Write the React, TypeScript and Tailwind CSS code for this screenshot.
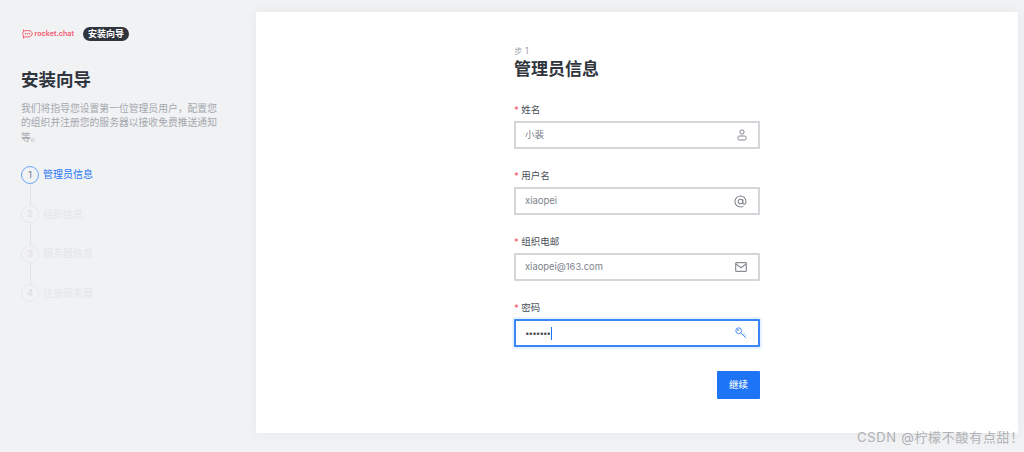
import type { ReactNode } from "react";

const font = "font-['Inter','Noto_Sans_CJK_SC',sans-serif]";

const steps = [
  { n: 1, label: "管理员信息", active: true },
  { n: 2, label: "组织信息", active: false },
  { n: 3, label: "服务器信息", active: false },
  { n: 4, label: "注册服务器", active: false },
];

const Logo = () => (
  <div className="flex w-[52px] items-center gap-[1.5px] pl-[1px]">
    <svg width="11" height="10" viewBox="0 0 12 11" fill="none" stroke="#f5596c" strokeWidth="1.1" className="shrink-0">
      <path d="M1.5 1 L3 2.2 C5 1.5 7.5 1.5 9 2.2 C10.5 3 11.2 4 11.2 5.2 C11.2 7.5 8.8 8.8 6 8.8 C5 8.8 4.2 8.7 3.5 8.4 L1.5 10 L1.7 7.3 C1 6.6 0.7 6 0.7 5.2 C0.7 4.4 1 3.8 1.7 3.2 Z" />
      <circle cx="3.8" cy="5.3" r="0.4" fill="#f5596c" />
      <circle cx="6" cy="5.3" r="0.4" fill="#f5596c" />
      <circle cx="8.2" cy="5.3" r="0.4" fill="#f5596c" />
    </svg>
    <span className="text-[7.2px] leading-none font-semibold whitespace-nowrap text-[#f5596c]">rocket.chat</span>
  </div>
);

const UserIcon = () => (
  <svg width="10" height="12" viewBox="0 0 10 12" fill="none" stroke="#7d828a" strokeWidth="1">
    <circle cx="5" cy="3" r="2.1" />
    <rect x="0.9" y="7" width="8.2" height="4" rx="1.6" />
  </svg>
);

const AtIcon = () => (
  <svg width="13" height="13" viewBox="0 0 14 14" fill="none" stroke="#7d828a" strokeWidth="1.1">
    <circle cx="7" cy="7" r="2.5" />
    <path d="M9.5 4.5 V8 C9.5 9.4 10.2 10 11 10 C12.2 10 12.9 8.8 12.9 7 C12.9 3.6 10.3 1 7 1 C3.7 1 1 3.7 1 7 C1 10.3 3.7 13 7 13 C8.3 13 9.3 12.7 10.3 12" />
  </svg>
);

const MailIcon = () => (
  <svg width="12" height="10" viewBox="0 0 12 10" fill="none" stroke="#8a8e95" strokeWidth="1.2">
    <rect x="0.7" y="0.7" width="10.6" height="8.6" rx="0.5" />
    <path d="M1 2 L6 5.8 L11 2" />
  </svg>
);

const KeyIcon = () => (
  <svg width="12" height="12" viewBox="0 0 12 12" fill="none" stroke="#4d90f6" strokeWidth="1">
    <circle cx="3.7" cy="3.7" r="2.9" />
    <circle cx="3" cy="3" r="0.5" fill="#4d90f6" />
    <path d="M5.8 5.8 L10.8 10.8 M8.2 8.2 L9.6 6.9 M9.6 9.6 L10.8 8.4" />
  </svg>
);

const Step = ({ n, label, active }: { n: number; label: string; active: boolean }) => (
  <div className="flex flex-col">
    <div className="flex h-[18px] items-center gap-[4px]">
      <div
        className={
          active
            ? "flex h-[18px] w-[18px] items-center justify-center rounded-full border border-[#6ea6f8] text-[9px] text-[#6b7280]"
            : "flex h-[18px] w-[18px] items-center justify-center rounded-full border border-[#e7e9ec] text-[9px] font-semibold text-[#dfe1e5]"
        }
      >
        {n}
      </div>
      <span className={active ? "text-[10px] text-[#1d74f5]" : "text-[10px] text-[#e4e6ea]"}>{label}</span>
    </div>
    {n < 4 && <div className="ml-[8.5px] h-[21.5px] w-px bg-[#e0e2e6]" />}
  </div>
);

const Field = ({
  label,
  icon,
  focused,
  children,
}: {
  label: string;
  icon: ReactNode;
  focused?: boolean;
  children: ReactNode;
}) => (
  <div className="flex flex-col">
    <div className="mb-[4px] flex h-[14px] items-center gap-[2.5px] text-[9.5px] text-[#4a4f57]">
      <span className="text-[#f5596c]">*</span>
      <span>{label}</span>
    </div>
    <div
      className={
        focused
          ? "flex h-[28px] items-center justify-between rounded-[1px] border-2 border-[#3b86f6] bg-white pr-[11px] pl-[9px] shadow-[0_0_0_2px_#e8f1fe]"
          : "flex h-[28px] items-center justify-between rounded-[1px] border-2 border-[#d3d5d8] bg-white pr-[11px] pl-[9px]"
      }
    >
      {children}
      {icon}
    </div>
  </div>
);

const App = () => {
  return (
    <div className={`${font} relative flex h-[452px] w-[1024px] overflow-hidden bg-[#f1f2f4]`}>
      <aside className="flex w-[256px] shrink-0 flex-col pt-[26px] pr-[36px] pl-[21px]">
        <div className="flex h-[15px] items-center gap-[10px]">
          <Logo />
          <span className="rounded-full bg-[#2f343d] px-[5px] py-[1px] text-[9px] leading-[12px] font-semibold text-white">
            安装向导
          </span>
        </div>
        <h1 className="mt-[27px] text-[17.5px] leading-[24px] font-bold text-[#2f343d]">安装向导</h1>
        <p className="mt-[9.5px] text-[9.8px] leading-[14.5px] text-[#a5a8ae]">
          我们将指导您设置第一位管理员用户，配置您的组织并注册您的服务器以接收免费推送通知等。
        </p>
        <div className="mt-[20.5px] flex flex-col">
          {steps.map((step) => (
            <Step key={step.n} n={step.n} label={step.label} active={step.active} />
          ))}
        </div>
      </aside>

      <main className="mt-[12px] h-[421px] w-[762px] bg-white pt-[34px] pl-[258px] shadow-[0_0_12px_rgba(0,0,0,0.05)]">
        <div className="flex w-[246px] flex-col">
          <div className="text-[8.5px] leading-[10px] text-[#9ea2a8]">步 1</div>
          <h2 className="mt-[1px] text-[17px] leading-[24px] font-bold text-[#2f343d]">管理员信息</h2>

          <div className="mt-[22px] flex flex-col gap-[20px]">
            <Field label="姓名" icon={<UserIcon />}>
              <span className="text-[9.5px] text-[#7d828a]">小裴</span>
            </Field>
            <Field label="用户名" icon={<AtIcon />}>
              <span className="text-[9.5px] text-[#7d828a]">xiaopei</span>
            </Field>
            <Field label="组织电邮" icon={<MailIcon />}>
              <span className="text-[9.4px] text-[#7d828a]">xiaopei@163.com</span>
            </Field>
            <Field label="密码" focused icon={<KeyIcon />}>
              <div className="flex h-[14px] items-center">
                <span className="text-[8px] leading-none tracking-[-0.9px] text-[#4a4f57]">•••••••</span>
                <span className="ml-[1px] h-[13px] w-px bg-[#1d74f5]" />
              </div>
            </Field>
          </div>

          <div className="mt-[24px] flex justify-end">
            <button className="h-[28px] w-[43px] rounded-[1px] bg-[#1d74f5] text-[9.5px] font-medium text-[#e8f1fe]">继续</button>
          </div>
        </div>
      </main>

      <div className="absolute right-0 bottom-[6px] text-[13px] leading-[18px] tracking-[0.7px] text-[#b0b2b5]">
        CSDN @柠檬不酸有点甜！
      </div>
    </div>
  );
};

export default App;
